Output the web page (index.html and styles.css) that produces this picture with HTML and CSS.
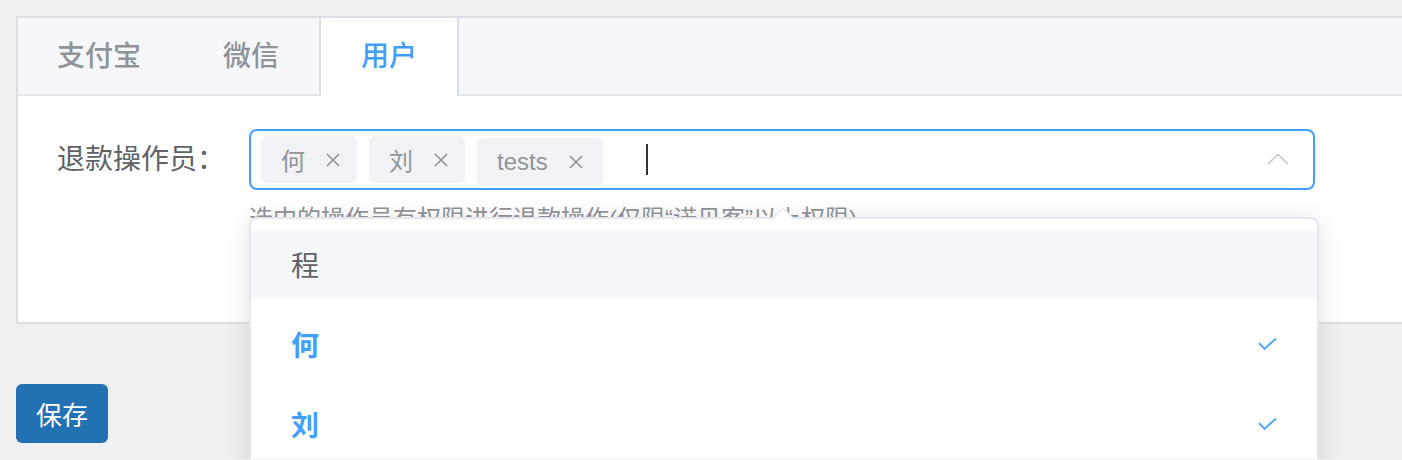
FILE: index.html
```
<!DOCTYPE html>
<html>
<head>
    <title>退款设置</title>
    <meta charset="UTF-8">
    <meta name="viewport" content="width=device-width, initial-scale=1.0">
    <link rel="stylesheet" href="styles.css">
</head>
<body>

<div class="page">
    <div class="card">
        <div class="tabs">
            <div class="tab">支付宝</div>
            <div class="tab">微信</div>
            <div class="tab active">用户</div>
        </div>

        <div class="tab-content">
            <div class="form-item">
                <label class="form-label">退款操作员：</label>
                <div class="form-control">
                    <div class="select">
                        <div class="select-tags">
                            <span class="tag">何<i class="tag-close"><svg viewBox="0 0 16 16"><path d="M2 2L14 14M14 2L2 14"/></svg></i></span>
                            <span class="tag">刘<i class="tag-close"><svg viewBox="0 0 16 16"><path d="M2 2L14 14M14 2L2 14"/></svg></i></span>
                            <span class="tag tag-low">tests<i class="tag-close"><svg viewBox="0 0 16 16"><path d="M2 2L14 14M14 2L2 14"/></svg></i></span>
                            <span class="select-cursor"></span>
                        </div>
                        <svg class="select-arrow" viewBox="0 0 24 14"><path d="M1 12L12 1.5L23 12"/></svg>
                    </div>
                    <div class="form-tip">选中的操作员有权限进行退款操作(仅限“诺贝客”以上权限)</div>

                    <!-- dropdown (open) -->
                    <div class="dropdown">
                        <span class="dropdown-arrow"></span>
                        <ul class="dropdown-list">
                            <li class="dropdown-item hover">程</li>
                            <li class="dropdown-item selected">何<svg class="check" viewBox="0 0 20 14"><path d="M1 6L7 12L19 1"/></svg></li>
                            <li class="dropdown-item selected">刘<svg class="check" viewBox="0 0 20 14"><path d="M1 6L7 12L19 1"/></svg></li>
                        </ul>
                    </div>
                </div>
            </div>
        </div>
    </div>

    <button class="btn">保存</button>
</div>

</body>
</html>
```

FILE: styles.css
```
/* page */
    body{
        padding:0;
        margin:0;
        overflow:hidden;
        background-color:#f0f0f0;
        font:normal 28px "Helvetica Neue", "Liberation Sans", "Noto Sans CJK SC", sans-serif;
        color:#606266;
    }
    .page{
        padding:16px;
    }
    .card{
        width:1400px;
        background-color:#fff;
        border:2px solid #dcdfe6;
        border-right:none;
    }
/* tabs */
    .tabs{
        display:flex;
        height:76px;
        background-color:#f5f7fa;
        border-bottom:2px solid #e4e7ed;
    }
    .tab{
        height:76px;
        line-height:78px;
        padding:0 40px;
        border-left:2px solid transparent;
        border-right:2px solid transparent;
        color:#909399;
        font-weight:500;
    }
    .tab:first-child{
        padding-left:39px;
        border-left:none;
    }
    .tab + .tab{
        margin-left:-2px;
    }
    .tab.active{
        height:78px;
        margin-bottom:-2px;
        background-color:#fff;
        border-left-color:#dcdfe6;
        border-right-color:#dcdfe6;
        color:#409eff;
    }
/* form */
    .tab-content{
        padding:33px 0 86px 30px;
    }
    .form-item{
        display:flex;
        align-items:flex-start;
    }
    .form-label{
        width:177px;
        padding-right:24px;
        line-height:61px;
        text-align:right;
        color:#606266;
    }
    .form-control{
        position:relative;
        width:1066px;
    }
    .select{
        display:flex;
        align-items:center;
        justify-content:space-between;
        height:57px;
        padding:0 24px 0 10px;
        border:2px solid #409eff;
        border-radius:8px;
        background-color:#fff;
    }
    .select-tags{
        display:flex;
        align-items:center;
        gap:12px;
    }
    .tag{
        display:flex;
        align-items:center;
        height:47px;
        padding:0 16px 0 20px;
        border-radius:6px;
        background-color:#f0f2f5;
        color:#909399;
        font-size:24px;
    }
    .tag-low{
        margin-top:4px;
        padding-right:19px;
    }
    .tag-close{
        display:block;
        width:16px;
        height:16px;
        margin-left:20px;
    }
    .tag-close svg{
        display:block;
        width:16px;
        height:16px;
        fill:none;
        stroke:#909399;
        stroke-width:1.6;
    }
    .select-cursor{
        display:block;
        width:2px;
        height:31px;
        margin-left:31px;
        background-color:#303133;
    }
    .select-arrow{
        width:22px;
        height:13px;
        fill:none;
        stroke:#c0c4cc;
        stroke-width:1.6;
    }
    .form-tip{
        margin-top:12px;
        line-height:34px;
        font-size:24px;
        color:#909399;
        white-space:nowrap;
    }
/* dropdown */
    .dropdown{
        position:absolute;
        top:88px;
        left:0;
        z-index:10;
        width:1066px;
        height:300px;
        border:2px solid #e4e7ed;
        border-radius:8px;
        background-color:#fff;
        box-shadow:0 4px 24px rgba(0,0,0,.12);
    }
    .dropdown-arrow{
        position:absolute;
        top:-12px;
        left:520px;
        width:0;
        height:0;
        border-left:12px solid transparent;
        border-right:12px solid transparent;
        border-bottom:12px solid #e4e7ed;
    }
    .dropdown-arrow::after{
        content:"";
        position:absolute;
        top:2px;
        left:-10px;
        border-left:10px solid transparent;
        border-right:10px solid transparent;
        border-bottom:10px solid #fff;
    }
    .dropdown-list{
        list-style:none;
        margin:0;
        padding:11px 0 0;
    }
    .dropdown-item{
        display:flex;
        align-items:center;
        justify-content:space-between;
        height:68px;
        margin-bottom:12px;
        padding:0 40px;
        color:#606266;
    }
    .dropdown-item.hover{
        background-color:#f5f7fa;
    }
    .dropdown-item.selected{
        color:#409eff;
        font-weight:700;
    }
    .check{
        width:19px;
        height:14px;
        fill:none;
        stroke:#409eff;
        stroke-width:1.8;
    }
/* button */
    .btn{
        display:block;
        width:92px;
        height:59px;
        margin-top:60px;
        padding:0;
        border:none;
        border-radius:6px;
        background-color:#2271b3;
        color:#fff;
        font:normal 26px "Liberation Sans", "Noto Sans CJK SC", sans-serif;
    }
```
